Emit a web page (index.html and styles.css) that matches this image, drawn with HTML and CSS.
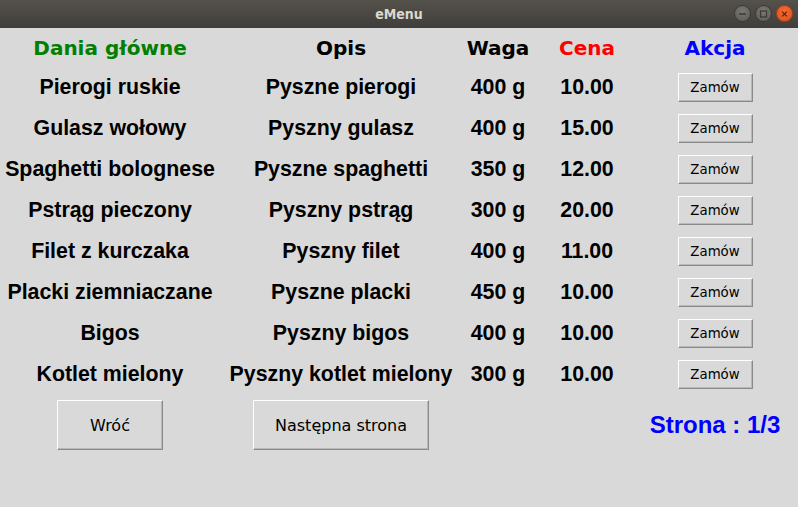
FILE: index.html
```html
<!DOCTYPE html>
<html lang="pl">
<head>
<meta charset="utf-8">
<title>eMenu</title>
<link rel="stylesheet" href="styles.css">
</head>
<body>
<div class="window">
  <div class="titlebar">
    <span class="title">eMenu</span>
    <div class="controls">
      <span class="ctl ctl-min"><svg width="16" height="16" viewBox="0 0 16 16"><line x1="4.5" y1="8" x2="11.5" y2="8" stroke="#3a3935" stroke-width="1.6"/></svg></span>
      <span class="ctl ctl-max"><svg width="16" height="16" viewBox="0 0 16 16"><rect x="4.8" y="4.8" width="6.4" height="6.4" fill="none" stroke="#3a3935" stroke-width="1.3"/></svg></span>
      <span class="ctl ctl-close"><svg width="16" height="16" viewBox="0 0 16 16"><path d="M5.5 5.5 L10.5 10.5 M10.5 5.5 L5.5 10.5" stroke="#5a2610" stroke-width="1.4"/></svg></span>
    </div>
  </div>
  <div class="content">
    <div class="table">
      <div class="cell head green">Dania główne</div>
      <div class="cell head">Opis</div>
      <div class="cell head">Waga</div>
      <div class="cell head red">Cena</div>
      <div class="cell head blue">Akcja</div>

      <div class="cell">Pierogi ruskie</div><div class="cell">Pyszne pierogi</div><div class="cell">400 g</div><div class="cell">10.00</div><div class="cell"><button class="btn small">Zamów</button></div>
      <div class="cell">Gulasz wołowy</div><div class="cell">Pyszny gulasz</div><div class="cell">400 g</div><div class="cell">15.00</div><div class="cell"><button class="btn small">Zamów</button></div>
      <div class="cell">Spaghetti bolognese</div><div class="cell">Pyszne spaghetti</div><div class="cell">350 g</div><div class="cell">12.00</div><div class="cell"><button class="btn small">Zamów</button></div>
      <div class="cell">Pstrąg pieczony</div><div class="cell">Pyszny pstrąg</div><div class="cell">300 g</div><div class="cell">20.00</div><div class="cell"><button class="btn small">Zamów</button></div>
      <div class="cell">Filet z kurczaka</div><div class="cell">Pyszny filet</div><div class="cell">400 g</div><div class="cell">11.00</div><div class="cell"><button class="btn small">Zamów</button></div>
      <div class="cell">Placki ziemniaczane</div><div class="cell">Pyszne placki</div><div class="cell">450 g</div><div class="cell">10.00</div><div class="cell"><button class="btn small">Zamów</button></div>
      <div class="cell">Bigos</div><div class="cell">Pyszny bigos</div><div class="cell">400 g</div><div class="cell">10.00</div><div class="cell"><button class="btn small">Zamów</button></div>
      <div class="cell">Kotlet mielony</div><div class="cell">Pyszny kotlet mielony</div><div class="cell">300 g</div><div class="cell">10.00</div><div class="cell"><button class="btn small">Zamów</button></div>

      <div class="cell foot"><button class="btn big back">Wróć</button></div>
      <div class="cell foot"><button class="btn big next">Następna strona</button></div>
      <div class="cell foot"></div>
      <div class="cell foot"></div>
      <div class="cell foot page">Strona : 1/3</div>
    </div>
  </div>
</div>
</body>
</html>
```

FILE: styles.css
```css
html, body {
  margin: 0;
  padding: 0;
  background: #d9d9d9;
}
.window {
  width: 798px;
  height: 507px;
  background: #d9d9d9;
  display: flex;
  flex-direction: column;
  overflow: hidden;
}
.titlebar {
  height: 28px;
  flex: none;
  background: linear-gradient(#55524c, #403e3a);
  display: flex;
  align-items: center;
  justify-content: center;
  position: relative;
}
.title {
  font-family: "DejaVu Sans Condensed", "DejaVu Sans", sans-serif;
  font-stretch: condensed;
  font-weight: bold;
  font-size: 14px;
  color: #dcd8cf;
  margin-top: -1px;
}
.controls {
  position: absolute;
  right: 5px;
  top: 5px;
  display: flex;
  gap: 4px;
}
.ctl {
  width: 17px;
  height: 17px;
  border-radius: 50%;
  display: flex;
  align-items: center;
  justify-content: center;
  box-sizing: border-box;
}
.ctl-min, .ctl-max {
  background: radial-gradient(circle at 50% 35%, #7a7873, #5c5a55);
  border: 1px solid #3a3935;
}
.ctl-close {
  background: radial-gradient(circle at 50% 35%, #f26a35, #e0501a);
  border: 1px solid #a8401a;
}
.content {
  flex: 1;
}
.table {
  display: grid;
  grid-template-columns: 220px 242px 72px 106px 150px;
  grid-template-rows: 39px repeat(8, 41px) 60px;
}
.cell {
  display: flex;
  align-items: center;
  justify-content: center;
  white-space: nowrap;
  font-family: "Liberation Sans", Arial, sans-serif;
  font-weight: bold;
  font-size: 21.33px;
  color: #000;
}
.head {
  font-family: "DejaVu Sans", sans-serif;
  font-size: 20px;
}
.green { color: #008000; }
.red { color: #ff0000; }
.blue { color: #0000ff; }
.btn {
  font-family: "DejaVu Sans", sans-serif;
  font-weight: normal;
  font-size: 13.33px;
  color: #000;
  background: #d9d9d9;
  border: 1px solid;
  border-color: #ffffff #8a8a8a #8a8a8a #ffffff;
  box-shadow: inset -1px -1px 0 #b8b8b8;
  padding: 0;
  margin: 0;
}
.btn.small {
  width: 75px;
  height: 29px;
}
.btn.big {
  height: 50px;
  font-size: 16px;
}
.back { width: 106px; }
.next { width: 176px; }
.foot {
  align-items: flex-start;
  padding-top: 5px;
}
.page {
  align-items: center;
  padding-top: 0;
  color: #0000ff;
  font-size: 24px;
  overflow: visible;
}
```
